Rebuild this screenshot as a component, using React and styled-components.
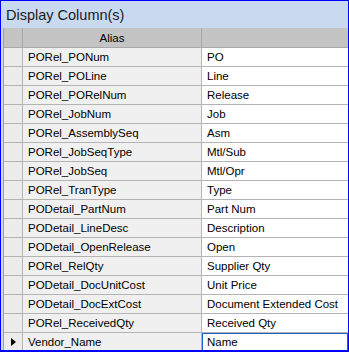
import React from "react";
import styled, { createGlobalStyle } from "styled-components";

const GlobalStyle = createGlobalStyle`
  html, body {
    margin: 0;
    padding: 0;
    background: #ffffff;
  }
  * {
    box-sizing: border-box;
  }
`;

const rows = [
  ["PORel_PONum", "PO"],
  ["PORel_POLine", "Line"],
  ["PORel_PORelNum", "Release"],
  ["PORel_JobNum", "Job"],
  ["PORel_AssemblySeq", "Asm"],
  ["PORel_JobSeqType", "Mtl/Sub"],
  ["PORel_JobSeq", "Mtl/Opr"],
  ["PORel_TranType", "Type"],
  ["PODetail_PartNum", "Part Num"],
  ["PODetail_LineDesc", "Description"],
  ["PODetail_OpenRelease", "Open"],
  ["PORel_RelQty", "Supplier Qty"],
  ["PODetail_DocUnitCost", "Unit Price"],
  ["PODetail_DocExtCost", "Document Extended Cost"],
  ["PORel_ReceivedQty", "Received Qty"],
  ["Vendor_Name", "Name"],
];

const Panel = styled.div`
  width: 349px;
  height: 352px;
  overflow: hidden;
  background: #c9daf0;
  border: 1px solid #0000ff;
  border-bottom-width: 2px;
  font-family: "Liberation Sans", Arial, sans-serif;
  color: #000;
  display: flex;
  flex-direction: column;
`;

const Title = styled.div`
  height: 27px;
  flex: none;
  display: flex;
  align-items: center;
  padding-left: 5px;
  font-size: 14.5px;
  color: #1a1a1a;
`;

const Grid = styled.div`
  margin-left: 2px;
  border-left: 1px solid #a0a0a0;
  background: #ffffff;
  flex: 1;
  overflow: hidden;
`;

const Row = styled.div`
  display: grid;
  grid-template-columns: 19px 179px 1fr;
  height: ${(p) => (p.$header ? 20 : 19)}px;
  border-bottom: 1px solid ${(p) => (p.$header ? "#a8a8a8" : "#b4b4b4")};
`;

const Cell = styled.div`
  display: flex;
  align-items: center;
  justify-content: ${(p) => (p.$center ? "center" : "flex-start")};
  padding-left: ${(p) => (p.$center ? 0 : 5)}px;
  font-size: 11.5px;
  white-space: nowrap;
  overflow: hidden;
  border-right: 1px solid ${(p) => (p.$header ? "#a8a8a8" : "#b4b4b4")};
  background: ${(p) => p.$bg};
  box-shadow: ${(p) => (p.$focus ? "inset 0 0 0 1px #1a63c8" : "none")};
  &:last-child {
    border-right: none;
  }
`;

const Pointer = styled.span`
  width: 0;
  height: 0;
  margin-left: 7px;
  border-top: 4px solid transparent;
  border-bottom: 4px solid transparent;
  border-left: 5px solid #000;
`;

export default function App() {
  return (
    <>
      <GlobalStyle />
      <Panel>
        <Title>Display Column(s)</Title>
        <Grid>
          <Row $header>
            <Cell $header $bg="#c4c4c4" />
            <Cell $header $center $bg="#c4c4c4">Alias</Cell>
            <Cell $header $bg="#c4c4c4" />
          </Row>
          {rows.map(([alias, name], i) => {
            const current = i === rows.length - 1;
            return (
              <Row key={alias}>
                <Cell $bg="#ececec" style={{ paddingLeft: 0 }}>
                  {current && <Pointer />}
                </Cell>
                <Cell $bg="#f0f0f0">{alias}</Cell>
                <Cell $bg="#ffffff" $focus={current}>{name}</Cell>
              </Row>
            );
          })}
        </Grid>
      </Panel>
    </>
  );
}
